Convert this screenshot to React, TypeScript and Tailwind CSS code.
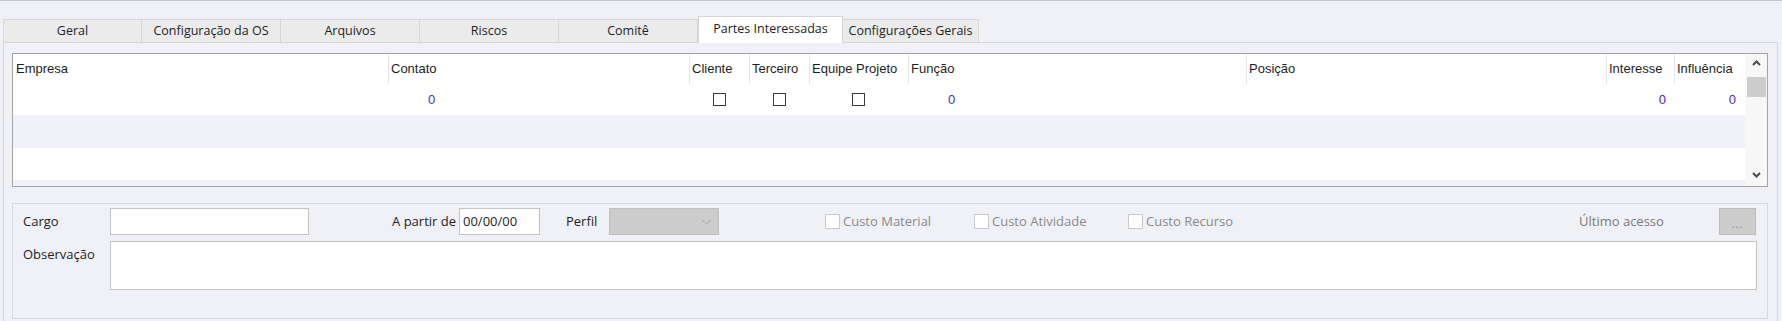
import React from "react";

const tabs = [
  { label: "Geral", w: "w-[139px]" },
  { label: "Configuração da OS", w: "w-[139px]" },
  { label: "Arquivos", w: "w-[139px]" },
  { label: "Riscos", w: "w-[139px]" },
  { label: "Comitê", w: "w-[139px]" },
];

const columns = [
  { label: "Empresa", w: "w-[375px]" },
  { label: "Contato", w: "w-[301px]" },
  { label: "Cliente", w: "w-[60px]" },
  { label: "Terceiro", w: "w-[60px]" },
  { label: "Equipe Projeto", w: "w-[99px]" },
  { label: "Função", w: "w-[338px]" },
  { label: "Posição", w: "w-[360px]" },
  { label: "Interesse", w: "w-[68px]" },
  { label: "Influência", w: "w-[70px]" },
];

const GridCheck = () => (
  <span className="block w-[13px] h-[13px] border-[1.5px] border-[#3a3a3a] bg-white" />
);

const Zero = () => <span className="text-[#3b2bd4]">0</span>;

const Chevron = ({ up }: { up?: boolean }) => (
  <svg width="9" height="6" viewBox="0 0 9 6">
    <path
      d={up ? "M1 5 L4.5 1.5 L8 5" : "M1 1 L4.5 4.5 L8 1"}
      fill="none"
      stroke="#4a4a4a"
      strokeWidth="2"
    />
  </svg>
);

const FormCheck = ({ label, w }: { label: string; w: string }) => (
  <div className={`flex items-center ${w}`}>
    <span className="block w-[15px] h-[15px] border border-[#cacaca] bg-white" />
    <span className="ml-[3px] text-[#8a8a8a]">{label}</span>
  </div>
);

export default function App() {
  return (
    <div
      className="w-[1782px] h-[321px] overflow-hidden bg-[#f0f1f6] border-t border-[#c9c9c9] text-[#1e1e1e]"
      style={{ fontFamily: "'Open Sans', sans-serif" }}
    >
      {/* tab strip */}
      <div className="flex items-end h-[41px] pl-[3px] text-[12.5px]">
        {tabs.map((t) => (
          <div
            key={t.label}
            className={`${t.w} h-[23px] flex items-center justify-center bg-[#ebebeb] border-t border-r border-[#d6d6d6] first:border-l`}
          >
            {t.label}
          </div>
        ))}
        <div className="w-[145px] h-[27px] -mb-px relative z-10 flex items-start justify-center pt-[3px] bg-white border-t border-l border-r border-[#d6d6d6]">
          Partes Interessadas
        </div>
        <div className="w-[136px] h-[23px] flex items-center justify-center bg-[#ebebeb] border-t border-r border-[#d6d6d6]">
          Configurações Gerais
        </div>
      </div>

      {/* tab panel */}
      <div className="ml-[3px] w-[1775px] h-[280px] border-t border-l border-r border-[#d6d6d6] pl-[8px] pt-[10px]">
        {/* grid */}
        <div
          className="w-[1756px] h-[134px] border border-[#a3a3a3] bg-white flex text-[13px]"
          style={{ fontFamily: "'Liberation Sans', Arial, sans-serif" }}
        >
          <div className="w-[1732px] flex flex-col">
            <div className="flex h-[30px]">
              {columns.map((c, i) => (
                <div
                  key={c.label}
                  className={`${c.w} flex items-center whitespace-nowrap overflow-hidden ${i === 0 ? "pl-[3px]" : "pl-[2px] border-l border-[#e6e6e6]"}`}
                >
                  {c.label}
                </div>
              ))}
            </div>
            <div className="flex h-[31px] items-center">
              <div className="w-[375px]" />
              <div className="w-[301px] pl-[40px]">
                <Zero />
              </div>
              <div className="w-[60px] flex justify-center">
                <GridCheck />
              </div>
              <div className="w-[60px] flex justify-center">
                <GridCheck />
              </div>
              <div className="w-[99px] flex justify-center">
                <GridCheck />
              </div>
              <div className="w-[338px] pl-[40px]">
                <Zero />
              </div>
              <div className="w-[360px]" />
              <div className="w-[68px] text-right pr-[8px]">
                <Zero />
              </div>
              <div className="w-[70px] text-right pr-[8px]">
                <Zero />
              </div>
            </div>
            <div className="h-[33px] bg-[#f1f2f7]" />
            <div className="h-[32px] bg-white" />
            <div className="flex-1 bg-[#f1f2f7]" />
          </div>
          <div className="w-[22px] flex flex-col items-center bg-[#f7f7f7]">
            <div className="h-[22px] flex items-center justify-center pb-[4px]">
              <Chevron up />
            </div>
            <div className="mt-px w-[19px] h-[20px] bg-[#cdcdcd]" />
            <div className="flex-1" />
            <div className="h-[22px] flex items-center justify-center">
              <Chevron />
            </div>
          </div>
        </div>

        {/* detail panel */}
        <div className="mt-[16px] w-[1756px] h-[116px] border border-[#d9d9d9] pt-[4px] pl-[10px] text-[13px]">
          <div className="flex items-center h-[27px]">
            <div className="w-[87px]">Cargo</div>
            <div className="w-[199px] h-[27px] border border-[#c3c3c3] bg-white" />
            <div className="w-[150px] text-right pr-[3px]">A partir de</div>
            <div className="w-[81px] h-[27px] border border-[#c3c3c3] bg-white flex items-center pl-[3px]">
              00/00/00
            </div>
            <div className="w-[69px] pl-[26px]">Perfil</div>
            <div className="w-[110px] h-[27px] border border-[#c0c0c0] bg-[#cccccc] flex items-center justify-end pr-[6px]">
              <svg width="11" height="6" viewBox="0 0 11 6">
                <path d="M1 1 L5.5 5 L10 1" fill="none" stroke="#a9a9a9" strokeWidth="1" />
              </svg>
            </div>
            <div className="w-[106px]" />
            <FormCheck label="Custo Material" w="w-[149px]" />
            <FormCheck label="Custo Atividade" w="w-[154px]" />
            <FormCheck label="Custo Recurso" w="w-[451px]" />
            <div className="w-[140px] text-[#7a7a7a]">Último acesso</div>
            <div className="w-[37px] h-[27px] -mt-px border border-[#bcbcbc] bg-[#cccccc] flex items-end justify-center pb-[5px] text-[11px] leading-none tracking-[1px] text-[#8a8a8a]">
              ...
            </div>
          </div>
          <div className="flex mt-[6px]">
            <div className="w-[87px] pt-[4px]">Observação</div>
            <div className="w-[1647px] h-[49px] border border-[#c3c3c3] bg-white" />
          </div>
        </div>
      </div>
    </div>
  );
}
